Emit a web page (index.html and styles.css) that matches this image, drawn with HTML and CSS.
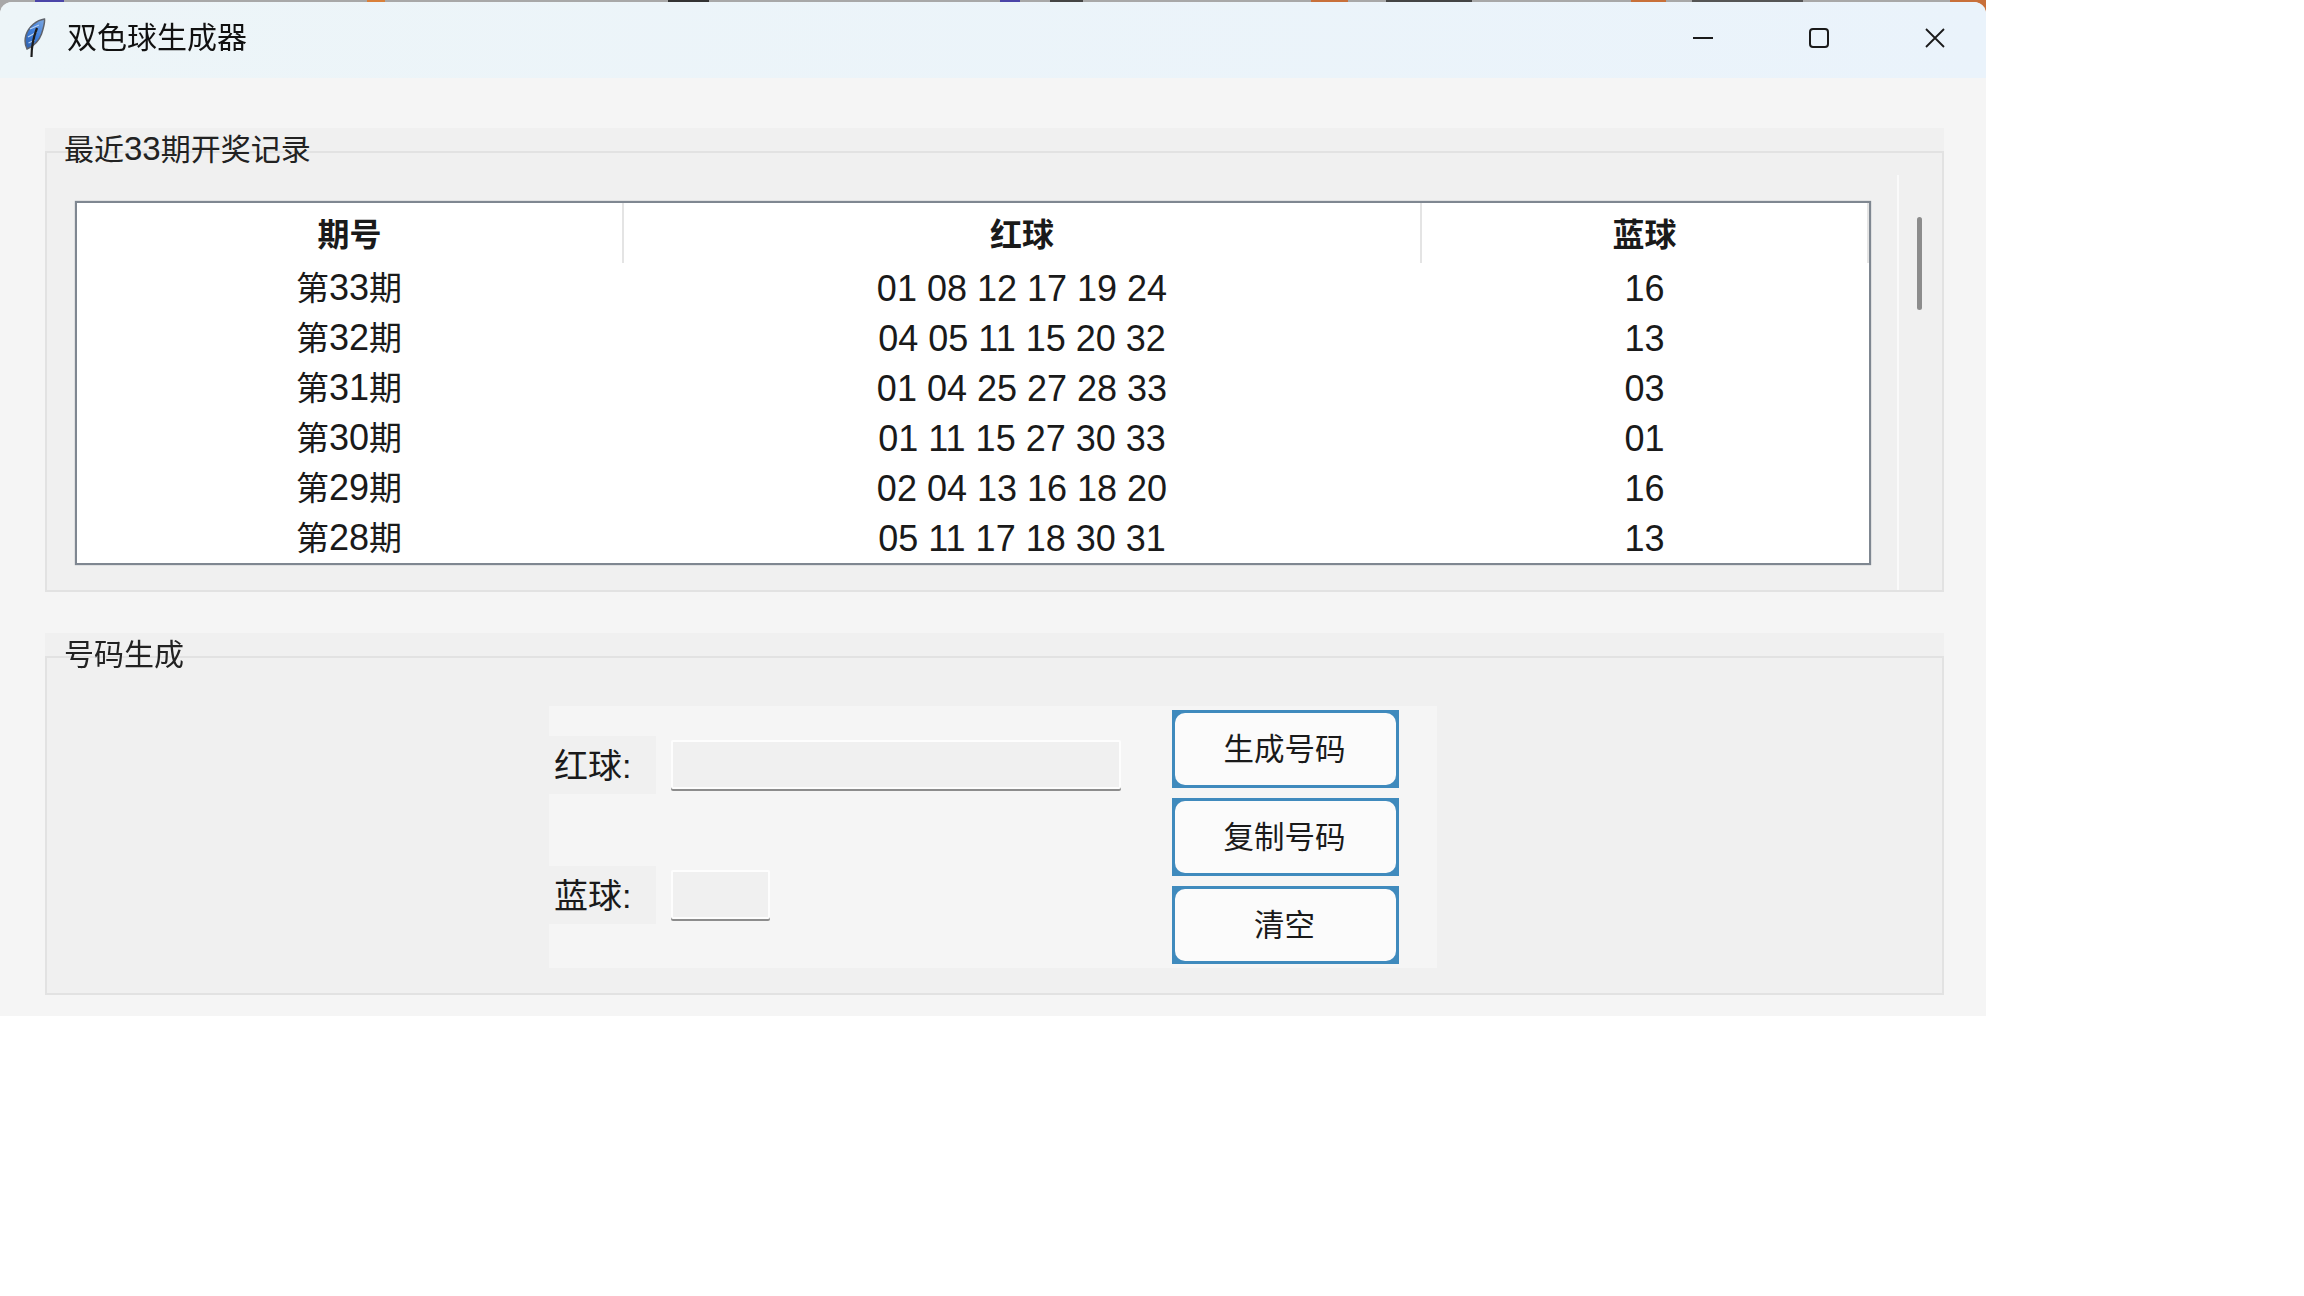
FILE: index.html
```html
<!DOCTYPE html>
<html lang="zh-CN">
<head>
    <meta charset="UTF-8">
    <title>双色球生成器</title>
    <link rel="stylesheet" href="styles.css">
</head>
<body>
<div class="window">
    <div class="titlebar">
        <svg class="feather" width="22" height="40" viewBox="0 0 22 40">
            <defs>
                <linearGradient id="quill" x1="1" y1="0" x2="0" y2="1">
                    <stop offset="0" stop-color="#7fa9e0"/>
                    <stop offset="0.5" stop-color="#3f7fdc"/>
                    <stop offset="1" stop-color="#2f5fa8"/>
                </linearGradient>
            </defs>
            <path d="M20.500 1C13 2 5 8 2 17C0.500 22 1 27 3 31C10 28 15 23 17.500 16C19.500 10 21 5 20.500 1Z" fill="url(#quill)" stroke="#5f636c" stroke-width="1.500"/>
            <path d="M6 11L15 7M4 19L13 14M4.500 25L11 22" stroke="#b9d3f2" stroke-width="1.200" fill="none"/>
            <path d="M13 10C9.500 19 7.500 28 7.500 39" stroke="#1c1c1c" stroke-width="2.200" fill="none"/>
        </svg>
        <span class="title">双色球生成器</span>
        <div class="controls">
            <svg width="20" height="20" viewBox="0 0 20 20"><path d="M0 10H20" stroke="#1a1a1a" stroke-width="2"/></svg>
            <svg width="20" height="20" viewBox="0 0 20 20"><rect x="1" y="1" width="18" height="18" rx="3" fill="none" stroke="#1a1a1a" stroke-width="2"/></svg>
            <svg width="20" height="20" viewBox="0 0 20 20"><path d="M1 1L19 19M19 1L1 19" stroke="#1a1a1a" stroke-width="1.800" fill="none"/></svg>
        </div>
    </div>

    <div class="content">
        <section class="group">
            <div class="legend">最近<span class="legend-num">33</span>期开奖记录</div>
            <div class="group-body history-body">
                <div class="tree">
                    <table>
                        <thead>
                            <tr><th>期号</th><th>红球</th><th>蓝球</th></tr>
                        </thead>
                        <tbody>
                            <tr><td class="period">第<span class="num">33</span>期</td><td class="num">01 08 12 17 19 24</td><td class="num">16</td></tr>
                            <tr><td class="period">第<span class="num">32</span>期</td><td class="num">04 05 11 15 20 32</td><td class="num">13</td></tr>
                            <tr><td class="period">第<span class="num">31</span>期</td><td class="num">01 04 25 27 28 33</td><td class="num">03</td></tr>
                            <tr><td class="period">第<span class="num">30</span>期</td><td class="num">01 11 15 27 30 33</td><td class="num">01</td></tr>
                            <tr><td class="period">第<span class="num">29</span>期</td><td class="num">02 04 13 16 18 20</td><td class="num">16</td></tr>
                            <tr><td class="period">第<span class="num">28</span>期</td><td class="num">05 11 17 18 30 31</td><td class="num">13</td></tr>
                        </tbody>
                    </table>
                </div>
                <div class="scrollbar"><div class="thumb"></div></div>
            </div>
        </section>

        <section class="group">
            <div class="legend">号码生成</div>
            <div class="group-body generate-body">
                <div class="panel">
                    <div class="fields">
                        <div class="field">
                            <label class="field-label">红球:</label>
                            <div class="entry entry-red"></div>
                        </div>
                        <div class="field">
                            <label class="field-label">蓝球:</label>
                            <div class="entry entry-blue"></div>
                        </div>
                    </div>
                    <div class="buttons">
                        <button class="btn"><span>生成号码</span></button>
                        <button class="btn"><span>复制号码</span></button>
                        <button class="btn"><span>清空</span></button>
                    </div>
                </div>
            </div>
        </section>
    </div>
</div>
</body>
</html>
```

FILE: styles.css
```css
* {margin: 0; padding: 0; box-sizing: border-box;}
body {
    width: 2304px;
    height: 1296px;
    overflow: hidden;
    background-color: #fff;
    background-image: linear-gradient(90deg,
        #a8a8a8 35px, #4b45a8 35px, #4b45a8 64px, #a8a8a8 64px,
        #a8a8a8 367px, #d9803a 367px, #d9803a 385px, #a8a8a8 385px,
        #a8a8a8 668px, #333 668px, #333 709px, #a8a8a8 709px,
        #a8a8a8 1000px, #4b45a8 1000px, #4b45a8 1020px, #a8a8a8 1020px,
        #a8a8a8 1050px, #444 1050px, #444 1083px, #a8a8a8 1083px,
        #a8a8a8 1311px, #c8703a 1311px, #c8703a 1348px, #a8a8a8 1348px,
        #a8a8a8 1386px, #444 1386px, #444 1472px, #a8a8a8 1472px,
        #a8a8a8 1631px, #c8703a 1631px, #c8703a 1666px, #a8a8a8 1666px,
        #a8a8a8 1692px, #555 1692px, #555 1803px, #a8a8a8 1803px,
        #a8a8a8 1950px, #c8703a 1950px, #c8703a 1986px, #fff 1986px);
    background-size: 100% 14px;
    background-repeat: no-repeat;
    font-family: "Liberation Sans", "Noto Sans CJK SC", sans-serif;
    color: #1a1a1a;
}

.window {
    width: 1986px;
    height: 1014px;
    margin-top: 2px;
    background: #f5f5f5;
    border-radius: 12px 12px 0 0;
    overflow: hidden;
}

.titlebar {
    display: flex;
    align-items: center;
    height: 76px;
    padding: 0 41px 4px 24px;
    background: linear-gradient(90deg, #edf5f8, #eaf3fb);
}
.title {font-size: 30px; line-height: 34px; margin-left: 21px; color: #111; filter: blur(0.4px);}
.controls {display: flex; gap: 96px; margin-left: auto;}
.controls svg {display: block;}

.content {
    display: flex;
    flex-direction: column;
    gap: 41px;
    padding: 50px 42px 0 45px;
    filter: blur(0.4px);
}

.group {position: relative; padding-top: 23px; background: #f0f0f0;}
.group:first-child {height: 464px;}
.group:last-child {height: 362px;}
.legend {
    position: absolute;
    left: 19px;
    top: 3px;
    font-size: 30px;
    line-height: 36px;
    color: #222;
}
.group:last-child .legend {top: 4px;}
.legend-num {font-size: 33px;}
.group-body {height: 100%; border: 2px solid #e2e2e2;}

.history-body {display: flex; padding-left: 28px;}
.tree {
    width: 1796px;
    height: 364px;
    margin-top: 48px;
    background: #fff;
    border: 2px solid #7f8791;
    box-shadow: 0 0 1px #8f949c;
    overflow: hidden;
}
.tree table {width: 100%; border-collapse: collapse; table-layout: fixed;}
.tree th {
    height: 60px;
    padding-bottom: 3px;
    font-size: 32px;
    font-weight: bold;
    border-right: 2px solid #e4e4e4;
}
.tree th:first-child {width: 546px;}
.tree th:nth-child(2) {width: 798px;}
.tree td {
    height: 50px;
    line-height: 40px;
    text-align: center;
    white-space: nowrap;
}
.tree td.period {font-size: 33px; padding-right: 2px;}
.tree td.num {font-size: 36px; padding-top: 2px;}
.num {font-size: 36px;}

.scrollbar {
    flex: 1;
    margin: 22px 0 0 26px;
    padding: 42px 0 0 18px;
    border-left: 2px solid #fafafa;
}
.thumb {width: 5px; height: 93px; background: #8c8c8c; border-radius: 3px;}

.generate-body {padding: 48px 0 0 502px;}
.panel {
    display: flex;
    width: 888px;
    height: 262px;
    padding: 4px 0 4px 0;
    background: #f5f5f5;
}

.fields {
    display: flex;
    flex-direction: column;
    gap: 72px;
    width: 623px;
    padding-top: 26px;
}
.field {display: flex; align-items: center; gap: 15px;}
.field-label {
    width: 107px;
    height: 58px;
    padding-left: 5px;
    font-size: 34px;
    line-height: 60px;
    background: #f0f0f0;
}
.entry {
    height: 49px;
    margin-bottom: 2px;
    background: #f0f0f0;
    border: 2px solid #fdfdfd;
    border-radius: 2px;
    box-shadow: 0 2px 0 #8c8c8c;
}
.entry-red {width: 450px;}
.entry-blue {width: 99px;}

.buttons {display: flex; flex-direction: column; gap: 10px; width: 227px; height: 254px;}
.btn {
    flex: 1;
    display: block;
    padding: 3px;
    background: #3f8abd;
    border: none;
    font-family: inherit;
    font-size: 30.500px;
    color: #1a1a1a;
}
.btn span {
    display: flex;
    align-items: center;
    justify-content: center;
    height: 100%;
    padding: 0 2px 4px 0;
    background: #fbfbfb;
    border-radius: 10px;
}
```
